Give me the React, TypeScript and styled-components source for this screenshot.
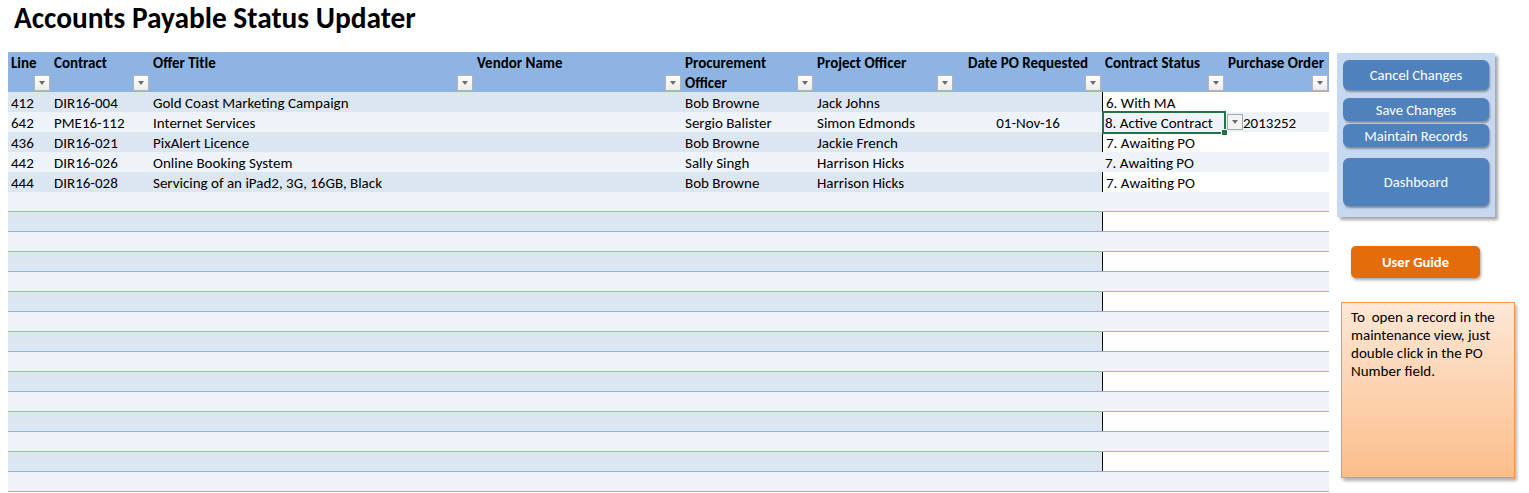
import React from 'react';
import styled, { createGlobalStyle, css } from 'styled-components';

const Global = createGlobalStyle`
  body {
    margin: 0;
    background: #fff;
    font-family: Carlito, Calibri, "Liberation Sans", Arial, sans-serif;
    color: #000;
  }
`;

const COLS = [43, 99, 324, 208, 132, 140, 148, 123, 104];
const template = COLS.map((c) => `${c}px`).join(' ');

const Page = styled.div`
  width: 1529px;
  height: 493px;
  overflow: hidden;
`;

const Title = styled.h1`
  margin: 0;
  height: 52px;
  padding: 0 0 0 14px;
  font-size: 29.4px;
  line-height: normal;
  font-weight: bold;
  box-sizing: border-box;
`;

const Body = styled.div`
  display: flex;
  align-items: flex-start;
  padding-left: 8px;
`;

const Sheet = styled.div`
  width: 1321px;
  display: flex;
  flex-direction: column;
`;

const HeaderRow = styled.div`
  display: grid;
  grid-template-columns: ${template};
  height: 40px;
  background: #8db4e2;
`;

const HeadCell = styled.div<{ $center?: boolean }>`
  position: relative;
  padding: 1px 3px 0 3px;
  font-size: 15px;
  font-weight: bold;
  line-height: 20px;
  text-align: ${(p) => (p.$center ? 'center' : 'left')};
  white-space: pre-line;
`;

const FilterBtn = styled.span`
  position: absolute;
  right: 1px;
  bottom: 2px;
  width: 14px;
  height: 14px;
  border: 1px solid #b4b4b4;
  background: linear-gradient(#ffffff, #ececec);
  display: flex;
  align-items: center;
  justify-content: center;
  &::after {
    content: '';
    border-left: 3.5px solid transparent;
    border-right: 3.5px solid transparent;
    border-top: 4px solid #6d6d6d;
  }
`;

const Row = styled.div`
  display: grid;
  grid-template-columns: ${template};
  height: 20px;
  border-bottom: 1px solid #8db4e2;
  box-sizing: border-box;
`;

const Cell = styled.div<{
  $tone: 'dark' | 'light' | 'white';
  $edge?: boolean;
  $center?: boolean;
  $indent?: number;
  $active?: boolean;
}>`
  position: relative;
  z-index: ${(p) => (p.$active ? 3 : 'auto')};
  font-size: 15px;
  line-height: 18px;
  padding: 2px 3px 0 ${(p) => 3 + (p.$indent ?? 0)}px;
  box-sizing: border-box;
  white-space: nowrap;
  text-align: ${(p) => (p.$center ? 'center' : 'left')};
  background: ${(p) => (p.$tone === 'dark' ? '#dce6f1' : p.$tone === 'light' ? '#eef3fa' : '#ffffff')};
  ${(p) =>
    p.$edge &&
    css`
      border-left: 1px solid #000;
    `}
`;

const Selected = styled.span`
  position: absolute;
  left: 0;
  top: -1px;
  right: -1px;
  bottom: -2px;
  border: 2px solid #217346;
  pointer-events: none;
  &::after {
    content: '';
    position: absolute;
    right: -4px;
    bottom: -4px;
    width: 5px;
    height: 5px;
    background: #217346;
    border: 1px solid #fff;
  }
`;

const CellDrop = styled.span`
  position: absolute;
  left: calc(100% + 2px);
  top: 2px;
  width: 14px;
  height: 14px;
  border: 1px solid #a8a8a8;
  background: #f3f3f3;
  display: flex;
  align-items: center;
  justify-content: center;
  &::after {
    content: '';
    border-left: 3.5px solid transparent;
    border-right: 3.5px solid transparent;
    border-top: 4px solid #6d6d6d;
  }
`;

const Side = styled.div`
  margin-left: 8px;
  margin-top: 1px;
  display: flex;
  flex-direction: column;
  align-items: flex-start;
`;

const Panel = styled.div`
  width: 158px;
  height: 164px;
  box-sizing: border-box;
  background: #c6d9f1;
  padding: 7px 7px 0 6px;
  box-shadow: 3px 3px 3px rgba(0, 0, 0, 0.35);
  display: flex;
  flex-direction: column;
`;

const Action = styled.button<{ $h: number; $gap: number }>`
  height: ${(p) => p.$h}px;
  margin-top: ${(p) => p.$gap}px;
  width: 146px;
  border: none;
  border-radius: 6px;
  background: #4f81bd;
  color: #fff;
  font-family: inherit;
  font-size: 14.6px;
  padding: 0;
  box-shadow: 1px 2px 2px rgba(0, 0, 0, 0.35);
`;

const Guide = styled.button`
  margin: 29px 0 0 14px;
  width: 129px;
  height: 32px;
  border: none;
  border-radius: 5px;
  background: #e46c0a;
  color: #fff;
  font-family: inherit;
  font-weight: bold;
  font-size: 14.6px;
  box-shadow: 1px 2px 3px rgba(0, 0, 0, 0.35);
`;

const Note = styled.div`
  margin: 24px 0 0 4px;
  width: 174px;
  height: 176px;
  box-sizing: border-box;
  border: 1px solid #f79646;
  background: linear-gradient(#fde7d6, #fbbe8b);
  box-shadow: 2px 3px 3px rgba(0, 0, 0, 0.3);
  padding: 5px 8px 0 9px;
  font-size: 15px;
  line-height: 18px;
`;

const headers: { label: string; center?: boolean }[] = [
  { label: 'Line' },
  { label: 'Contract' },
  { label: 'Offer Title' },
  { label: 'Vendor Name' },
  { label: 'Procurement\nOfficer' },
  { label: 'Project Officer' },
  { label: 'Date PO Requested', center: true },
  { label: 'Contract Status' },
  { label: 'Purchase Order' },
];

const data: string[][] = [
  ['412', 'DIR16-004', 'Gold Coast Marketing Campaign', '', 'Bob Browne', 'Jack Johns', '', '6. With MA', ''],
  ['642', 'PME16-112', 'Internet Services', '', 'Sergio Balister', 'Simon Edmonds', '01-Nov-16', '8. Active Contract', '2013252'],
  ['436', 'DIR16-021', 'PixAlert Licence', '', 'Bob Browne', 'Jackie French', '', '7. Awaiting PO', ''],
  ['442', 'DIR16-026', 'Online Booking System', '', 'Sally Singh', 'Harrison Hicks', '', '7. Awaiting PO', ''],
  ['444', 'DIR16-028', 'Servicing of an iPad2, 3G, 16GB, Black', '', 'Bob Browne', 'Harrison Hicks', '', '7. Awaiting PO', ''],
];

const TOTAL_ROWS = 20;

export default function App() {
  const rows = Array.from({ length: TOTAL_ROWS }, (_, i) => data[i] ?? Array(9).fill(''));
  return (
    <Page>
      <Global />
      <Title>Accounts Payable Status Updater</Title>
      <Body>
        <Sheet>
          <HeaderRow>
            {headers.map((h) => (
              <HeadCell key={h.label} $center={h.center}>
                {h.label}
                <FilterBtn />
              </HeadCell>
            ))}
          </HeaderRow>
          {rows.map((r, i) => {
            const dark = i % 2 === 0;
            return (
              <Row key={i}>
                {r.map((v, c) => {
                  const tail = c >= 7;
                  const tone = dark ? (tail ? 'white' : 'dark') : 'light';
                  const selected = i === 1 && c === 7;
                  return (
                    <Cell
                      key={c}
                      $tone={tone}
                      $edge={dark && c === 7}
                      $center={c === 6}
                      $indent={i === 1 && c === 8 ? 15 : 0}
                      $active={selected}
                    >
                      {v}
                      {selected && (
                        <>
                          <Selected />
                          <CellDrop />
                        </>
                      )}
                    </Cell>
                  );
                })}
              </Row>
            );
          })}
        </Sheet>
        <Side>
          <Panel>
            <Action $h={30} $gap={0}>Cancel Changes</Action>
            <Action $h={23} $gap={8}>Save Changes</Action>
            <Action $h={23} $gap={3}>Maintain Records</Action>
            <Action $h={48} $gap={11}>Dashboard</Action>
          </Panel>
          <Guide>User Guide</Guide>
          <Note>To&nbsp; open a record in the maintenance view, just double click in the PO Number field.</Note>
        </Side>
      </Body>
    </Page>
  );
}
